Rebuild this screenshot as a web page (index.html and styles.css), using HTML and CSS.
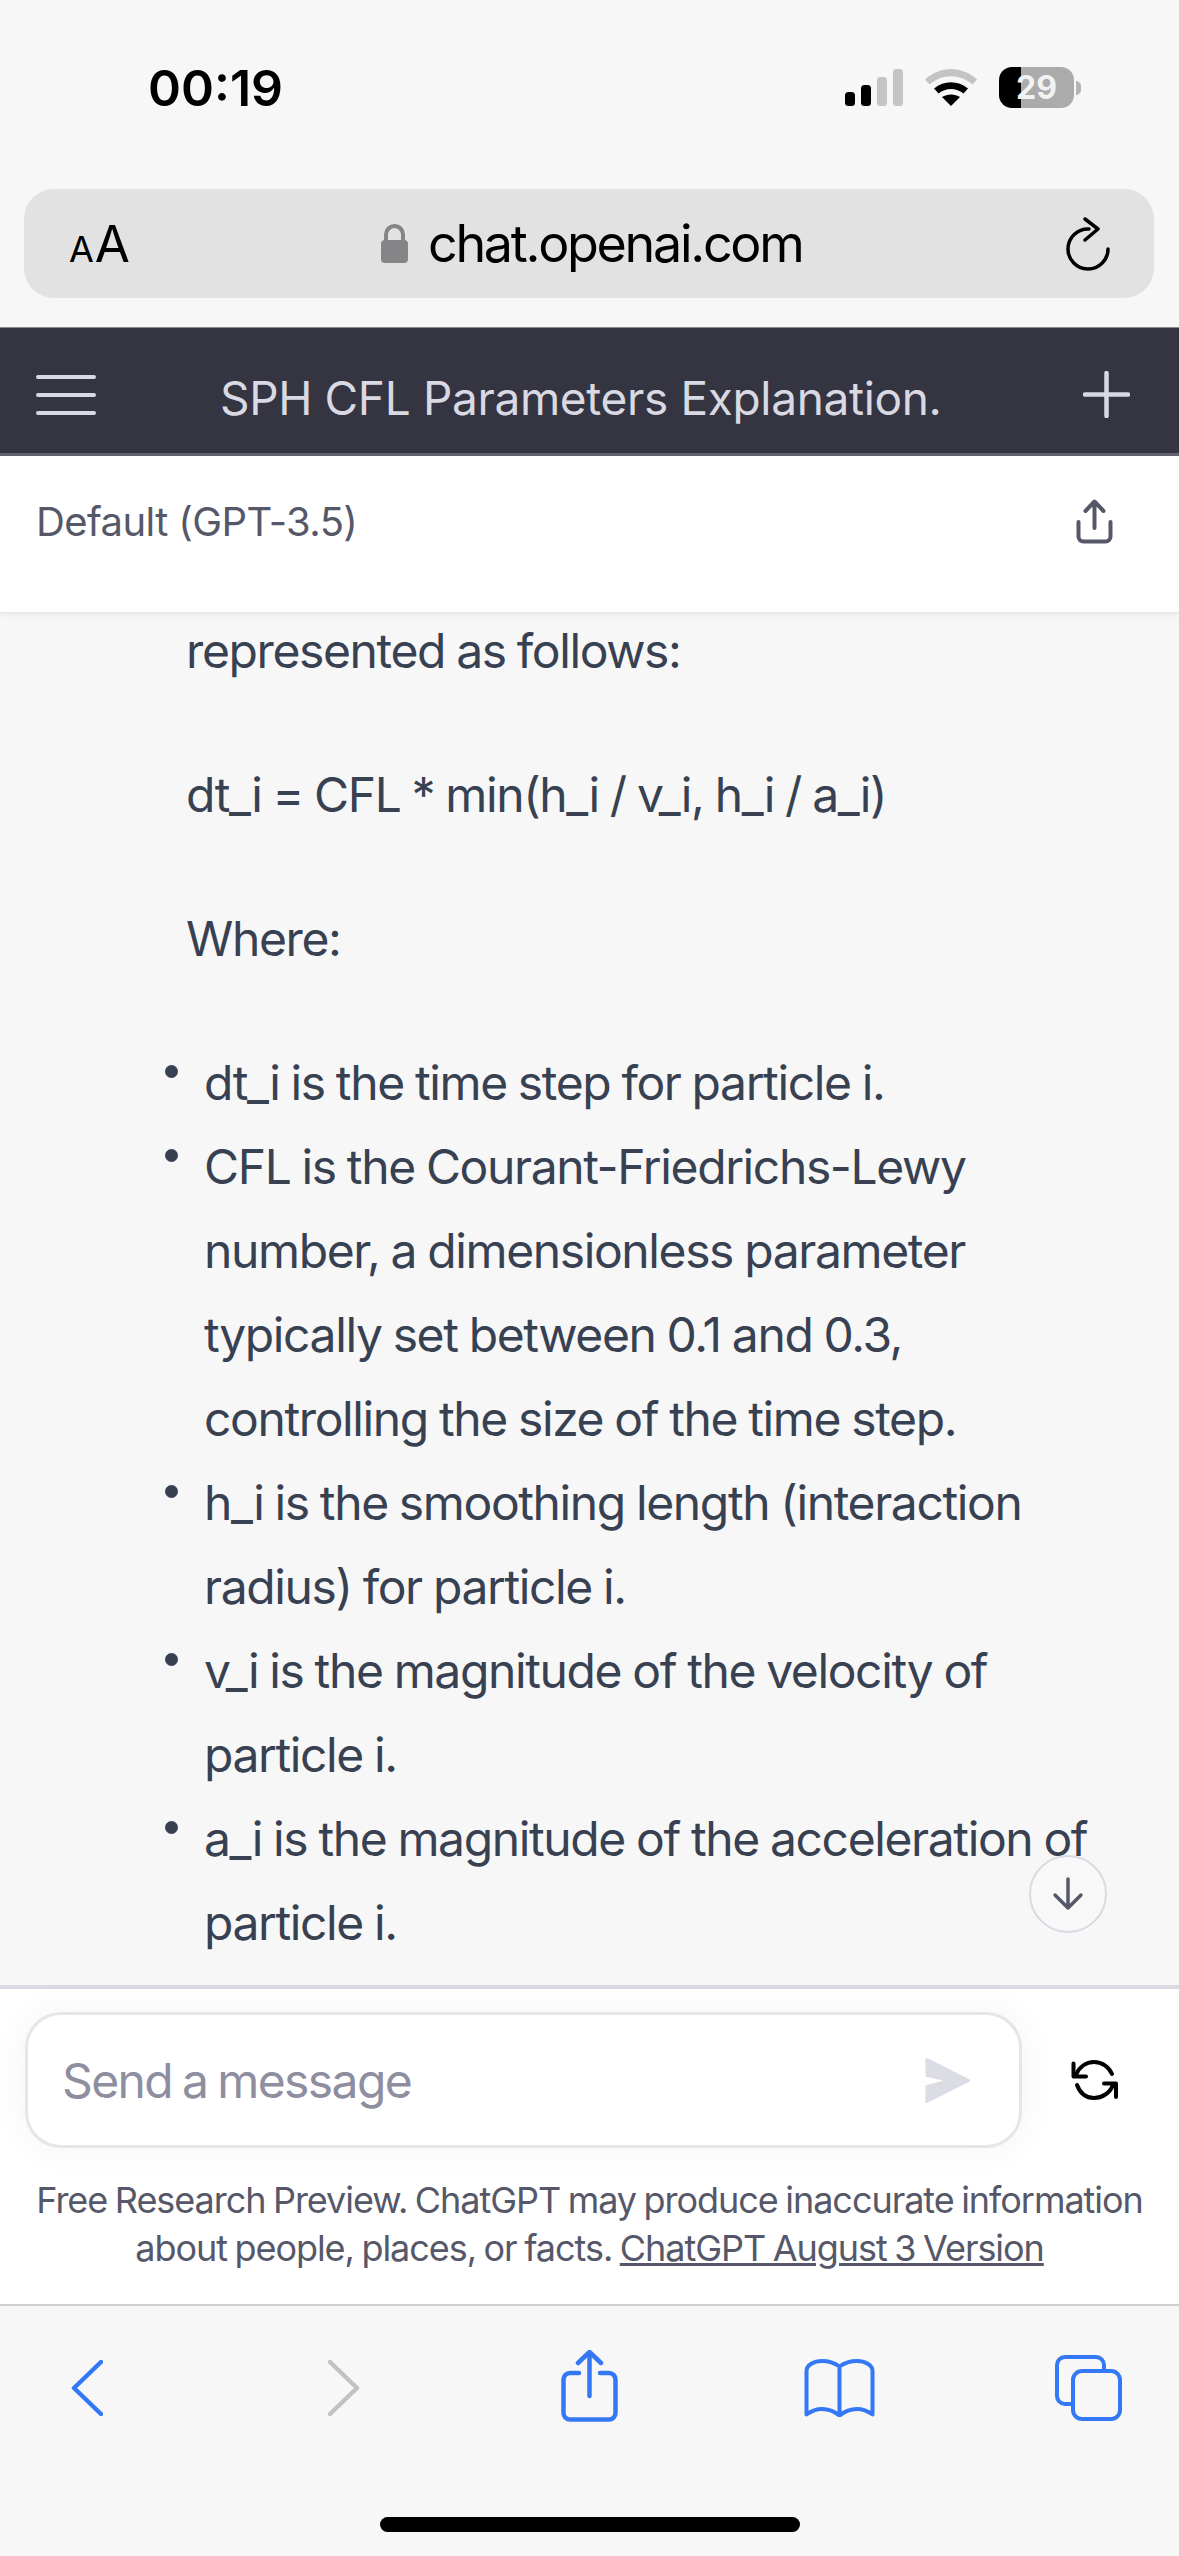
FILE: index.html
```html
<!DOCTYPE html>
<html lang="en">
<head>
<meta charset="utf-8">
<title>SPH CFL Parameters Explanation.</title>
<link rel="stylesheet" href="styles.css">
</head>
<body>
<div class="page">
  <header class="safari-top">
    <div class="status">
      <span class="time">00:19</span>
      <div class="status-icons">
        <svg class="signal" width="58" height="37" viewBox="0 0 58 37"><rect x="0" y="23" width="10" height="14" rx="3.5"/><rect x="16" y="16" width="10" height="21" rx="3.5"/><rect class="dim" x="32" y="8" width="10" height="29" rx="3.5"/><rect class="dim" x="48" y="0" width="10" height="37" rx="3.5"/></svg>
        <svg class="wifi" width="52" height="37" viewBox="0 0 52 37"><path d="M0 10.5C15-3.5 37-3.500 52 10.500L47.500 15.500C34.500 4.500 17.500 4.500 4.500 15.500Z" fill="#c4c4c4"/><path d="M9 19.500C19 11 33 11 43 19.500L38.500 24.500C31 18.500 21 18.500 13.500 24.500Z"/><path d="M17 28C22 24.500 30 24.500 35 28L26 37Z"/></svg>
        <div class="battery">
          <div class="battery-body"><span class="battery-num">29</span></div>
          <div class="battery-tip"></div>
        </div>
      </div>
    </div>
    <div class="address">
      <span class="aa"><small>A</small>A</span>
      <div class="url">
        <svg width="27" height="39" viewBox="0 0 27 39"><path d="M5 18V10.500a8.500 8.500 0 0 1 17 0V18" fill="none" stroke="#858587" stroke-width="4"/><rect x="0" y="16" width="27" height="23" rx="4" fill="#858587"/></svg>
        <span>chat.openai.com</span>
      </div>
      <svg class="reload" width="46" height="54" viewBox="0 0 46 54"><path d="M24 12A20 20 0 1 0 43 32" fill="none" stroke="#000" stroke-width="3.500" stroke-linecap="round"/><path d="M20 2L33 12L20 23" fill="none" stroke="#000" stroke-width="3.500" stroke-linecap="round" stroke-linejoin="round"/></svg>
    </div>
  </header>

  <nav class="topbar">
    <svg width="60" height="40" viewBox="0 0 60 40"><path d="M2 2H58M2 20H58M2 38H58" stroke="#d9d9e3" stroke-width="4" stroke-linecap="round"/></svg>
    <span class="topbar-title">SPH CFL Parameters Explanation.</span>
    <svg width="47" height="47" viewBox="0 0 47 47"><path d="M23.500 2V45M2 23.500H45" stroke="#d9d9e3" stroke-width="4.500" stroke-linecap="round"/></svg>
  </nav>

  <div class="model-bar">
    <span>Default (GPT-3.5)</span>
    <svg width="37" height="45" viewBox="0 0 37 45"><path d="M18.500 29V3M9.500 12L18.500 2.500L27.500 12M2.500 23V37.500a5 5 0 0 0 5 5H29.500a5 5 0 0 0 5-5V23" fill="none" stroke="#565869" stroke-width="4" stroke-linecap="round" stroke-linejoin="round"/></svg>
  </div>

  <main class="chat">
    <p>represented as follows:</p>
    <p>dt_i = CFL * min(h_i / v_i, h_i / a_i)</p>
    <p>Where:</p>
    <ul>
      <li>dt_i is the time step for particle i.</li>
      <li>CFL is the Courant-Friedrichs-Lewy<br>number, a dimensionless parameter<br>typically set between 0.1 and 0.3,<br>controlling the size of the time step.</li>
      <li>h_i is the smoothing length (interaction<br>radius) for particle i.</li>
      <li>v_i is the magnitude of the velocity of<br>particle i.</li>
      <li>a_i is the magnitude of the acceleration of<br>particle i.</li>
    </ul>
    <button class="scroll-down" aria-label="Scroll down">
      <svg width="32" height="34" viewBox="0 0 32 34"><path d="M16 2V31M3 18L16 31L29 18" fill="none" stroke="#565869" stroke-width="3.500" stroke-linecap="round" stroke-linejoin="round"/></svg>
    </button>
  </main>

  <section class="composer">
    <div class="input-row">
      <div class="input">
        <span>Send a message</span>
        <svg width="45" height="47" viewBox="0 0 45 47"><path d="M2 2.500L43.500 23.500L2 44.500V29.500L25 23.500L2 18.500Z" fill="#dcdce4" stroke="#dcdce4" stroke-width="3" stroke-linejoin="round"/></svg>
      </div>
      <svg class="regen" width="47" height="40" viewBox="0 0 47 40"><path d="M5 15C8 7 15 2 23 2C31 2 38 7 41 14M42 25C39 33 31 38 23 38C15 38 9 33 6 25" fill="none" stroke="#000" stroke-width="4" stroke-linecap="round"/><path d="M2.500 3.500V16.500H15M33 23.500H45V37" fill="none" stroke="#000" stroke-width="4" stroke-linecap="round" stroke-linejoin="round"/></svg>
    </div>
    <p class="disclaimer">Free Research Preview. ChatGPT may produce inaccurate information<br>about people, places, or facts. <a href="#">ChatGPT August 3 Version</a></p>
  </section>

  <footer class="safari-bottom">
    <div class="tools">
      <svg class="tool-low" width="32" height="56" viewBox="0 0 32 56"><path d="M30 2L3 28L30 54" fill="none" stroke="#3478f6" stroke-width="4.500" stroke-linecap="round" stroke-linejoin="round"/></svg>
      <svg class="tool-low tool-forward" width="32" height="56" viewBox="0 0 32 56"><path d="M2 2L29 28L2 54" fill="none" stroke="#c2c2c2" stroke-width="4.500" stroke-linecap="round" stroke-linejoin="round"/></svg>
      <svg class="tool-share" width="57" height="72" viewBox="0 0 57 72"><path d="M28.500 46V3M17 13L28.500 2L40 13M18 23H9a6.500 6.500 0 0 0-6.500 6.500V63a6.500 6.500 0 0 0 6.500 6.500H48a6.500 6.500 0 0 0 6.500-6.500V29.500a6.500 6.500 0 0 0-6.500-6.500H39" fill="none" stroke="#3478f6" stroke-width="4.500" stroke-linecap="round" stroke-linejoin="round"/></svg>
      <svg class="tool-low tool-book" width="71" height="58" viewBox="0 0 71 58"><path d="M35.500 7.500C30 3.500 24 2 18 2C10 2 2.500 6 2.500 12V55.500C8 51.500 13 50 18 50C24 50 30 52 35.500 56.500C41 52 47 50 53 50C58 50 63 51.500 68.500 55.500V12C68.500 6 61 2 53 2C47 2 41 3.500 35.500 7.500ZM35.500 7.500V56.500" fill="none" stroke="#3478f6" stroke-width="4" stroke-linejoin="round" stroke-linecap="round"/></svg>
      <svg class="tool-low tool-tabs" width="67" height="66" viewBox="0 0 67 66"><path d="M49 14V10a8 8 0 0 0-8-8H10a8 8 0 0 0-8 8V41a8 8 0 0 0 8 8H16" fill="none" stroke="#3478f6" stroke-width="4"/><rect x="18" y="16" width="47" height="48" rx="9" fill="none" stroke="#3478f6" stroke-width="4"/></svg>
    </div>
    <div class="home-indicator"></div>
  </footer>
</div>
</body>
</html>
```
FILE: styles.css
```css
* { box-sizing: border-box; }
html, body { margin: 0; padding: 0; }
body { font-family: Inter, "Liberation Sans", sans-serif; background: #f7f7f8; }
.page { width: 1179px; height: 2556px; display: flex; flex-direction: column; overflow: hidden; }

.safari-top { height: 327px; background: #f7f7f7; display: flex; flex-direction: column; }
.status { height: 189px; padding: 63px 98px 0 148px; display: flex; justify-content: space-between; align-items: flex-start; }
.time { font-size: 50px; font-weight: 600; line-height: 50px; color: #000; }
.status-icons { display: flex; align-items: flex-start; gap: 22px; padding-top: 6px; }
.signal rect { fill: #000; }
.signal rect.dim { fill: #c4c4c4; }
.battery { display: flex; align-items: center; gap: 2px; margin-top: -2px; }
.battery-body { width: 75px; height: 41px; border-radius: 13px; background: linear-gradient(90deg, #000 0 22px, #ababab 22px); display: flex; align-items: center; justify-content: center; }
.battery-num { font-size: 32px; font-weight: 700; color: #f2f2f2; line-height: 1; }
.battery-tip { width: 5px; height: 14px; background: #b5b5b5; border-radius: 0 7px 7px 0; }

.address { margin: 0 25px 0 24px; height: 109px; background: #e2e2e2; border-radius: 30px; display: flex; align-items: center; justify-content: space-between; padding: 0 43px 0 45px; position: relative; }
.aa { font-size: 51px; color: #000; line-height: 1; }
.aa small { font-size: 36px; margin-right: 1px; }
.url { position: absolute; left: 357px; top: 0; height: 109px; display: flex; align-items: center; gap: 20px; font-size: 52px; letter-spacing: -2.3px; color: #000; }

.topbar { height: 129px; background: #343541; border-top: 1px solid #8a8a90; border-bottom: 3px solid #63636f; display: flex; align-items: center; padding: 8px 49px 0 36px; }
.topbar-title { flex: 1; padding: 6px 0 0 124px; font-size: 46px; letter-spacing: -.35px; color: #d9d9e3; white-space: nowrap; }

.model-bar { height: 157px; background: #fff; border-bottom: 1px solid #e5e5e5; box-shadow: 0 2px 6px rgba(0,0,0,.06); padding: 0 66px 25px 36px; display: flex; align-items: center; justify-content: space-between; font-size: 40px; letter-spacing: -.6px; color: #565869; position: relative; z-index: 1; }

.chat { height: 1372px; background: #f7f7f8; position: relative; overflow: hidden; padding: 0 0 0 186px; color: #374151; font-size: 48px; line-height: 84px; letter-spacing: -1.38px; word-spacing: -1px; white-space: nowrap; }
.chat p { margin: -4px 0 64px; }
.chat ul { margin: -4px 0 0; padding: 0 0 0 18px; list-style: none; }
.chat li { margin: 0; position: relative; }
.chat li::before { content: ""; position: absolute; left: -39px; top: 24px; width: 13px; height: 13px; border-radius: 50%; background: #374151; }

.scroll-down { position: absolute; left: 1029px; top: 1242px; width: 78px; height: 78px; border-radius: 50%; border: 2px solid #d9d9e3; background: rgba(247,247,248,.8); padding: 0; display: flex; align-items: center; justify-content: center; }

.composer { height: 321px; background: #fff; border-top: 4px solid #d9d9e3; border-bottom: 2px solid #cfcfcf; }
.input-row { display: flex; align-items: center; padding: 23px 0 0 25px; gap: 49px; }
.input { width: 997px; height: 136px; border: 3px solid #e5e5ea; border-radius: 36px; background: #fff; box-shadow: 0 0 36px rgba(0,0,0,.05); padding: 0 49px 0 34px; display: flex; align-items: center; justify-content: space-between; font-size: 48px; letter-spacing: -1.6px; word-spacing: -2px; color: #8e8ea0; }
.disclaimer { margin: 28px 0 0; text-align: center; font-size: 36px; line-height: 48px; letter-spacing: -1.05px; word-spacing: -1.5px; color: #565869; white-space: nowrap; }
.disclaimer a { color: #565869; text-decoration: underline; }

.safari-bottom { height: 250px; background: #f7f7f7; position: relative; }
.tools { display: flex; align-items: center; padding: 44px 0 0 71px; }
.tool-low { margin-top: 4px; }
.tool-forward { margin-left: 225px; }
.tool-share { margin-left: 201px; }
.tool-book { margin-left: 186px; }
.tool-tabs { margin-left: 180px; }
.home-indicator { position: absolute; left: 380px; top: 211px; width: 420px; height: 15px; border-radius: 8px; background: #000; }
```
